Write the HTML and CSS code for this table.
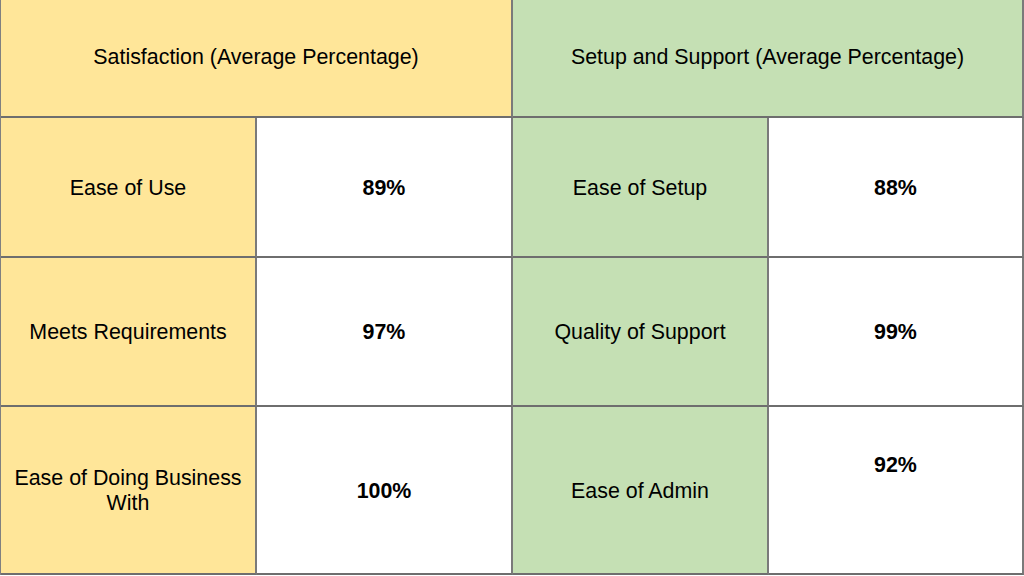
FILE: index.html
```html
<!DOCTYPE html>
<html>
<head>
<meta charset="utf-8">
<link rel="stylesheet" href="styles.css">
</head>
<body>
<div class="table">
  <div class="cell head yellow">Satisfaction (Average Percentage)</div>
  <div class="cell head green">Setup and Support (Average Percentage)</div>

  <div class="cell yellow">Ease of Use</div>
  <div class="cell value">89%</div>
  <div class="cell green">Ease of Setup</div>
  <div class="cell value">88%</div>

  <div class="cell yellow">Meets Requirements</div>
  <div class="cell value">97%</div>
  <div class="cell green">Quality of Support</div>
  <div class="cell value">99%</div>

  <div class="cell yellow">Ease of Doing Business<br>With</div>
  <div class="cell value">100%</div>
  <div class="cell green">Ease of Admin</div>
  <div class="cell value raised">92%</div>
</div>
</body>
</html>
```

FILE: styles.css
```css
html, body {
  margin: 0;
  padding: 0;
  background: #ffffff;
}

.table {
  display: grid;
  grid-template-columns: 256px 256px 256px 255px;
  grid-template-rows: 118px 140px 149px 168px;
  width: 1023px;
  box-sizing: border-box;
  border-left: 1px solid #808080;
  font-family: "Liberation Sans", Arial, sans-serif;
  font-size: 21.4px;
  line-height: 25px;
  color: #000000;
}

.cell {
  display: flex;
  align-items: center;
  justify-content: center;
  text-align: center;
  box-sizing: border-box;
  padding-top: 2px;
  border-right: 2px solid #7a7a7a;
  border-bottom: 2px solid #6e6e6e;
}

.head {
  grid-column: span 2;
  padding-top: 0;
  padding-bottom: 1px;
}

.yellow {
  background: #ffe699;
}

.green {
  background: #c5e0b4;
}

.value {
  background: #ffffff;
  font-weight: bold;
}

.raised {
  padding-bottom: 52px;
}
```
